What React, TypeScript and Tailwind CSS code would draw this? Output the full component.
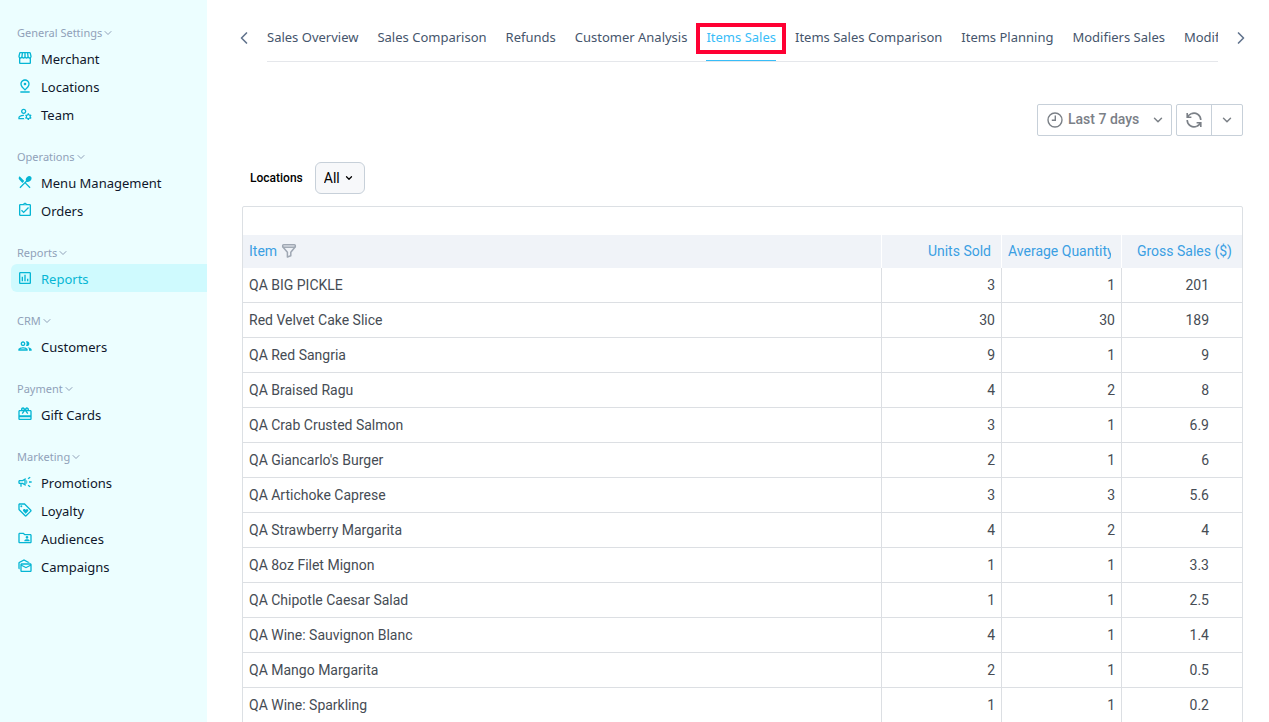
import { useState } from 'react';
import type { ReactNode } from 'react';
import { ChevronDown, ChevronLeft, ChevronRight } from 'lucide-react';
import {
  MdOutlineAssignmentTurnedIn,
  MdOutlineCampaign,
  MdOutlineCardGiftcard,
  MdOutlineFolderShared,
  MdOutlineGroup,
  MdOutlineInsertChart,
  MdOutlineLoyalty,
  MdOutlineManageAccounts,
  MdOutlineMarkAsUnread,
  MdOutlinePinDrop,
  MdOutlineRestaurantMenu,
  MdOutlineStorefront,
} from 'react-icons/md';

type NavItem = { label: string; icon: ReactNode; active?: boolean };
type NavGroup = { title: string; items: NavItem[] };

const groups: NavGroup[] = [
  {
    title: 'General Settings',
    items: [
      { label: 'Merchant', icon: <MdOutlineStorefront /> },
      { label: 'Locations', icon: <MdOutlinePinDrop /> },
      { label: 'Team', icon: <MdOutlineManageAccounts /> },
    ],
  },
  {
    title: 'Operations',
    items: [
      { label: 'Menu Management', icon: <MdOutlineRestaurantMenu /> },
      { label: 'Orders', icon: <MdOutlineAssignmentTurnedIn /> },
    ],
  },
  { title: 'Reports', items: [{ label: 'Reports', icon: <MdOutlineInsertChart />, active: true }] },
  { title: 'CRM', items: [{ label: 'Customers', icon: <MdOutlineGroup /> }] },
  { title: 'Payment', items: [{ label: 'Gift Cards', icon: <MdOutlineCardGiftcard /> }] },
  {
    title: 'Marketing',
    items: [
      { label: 'Promotions', icon: <MdOutlineCampaign /> },
      { label: 'Loyalty', icon: <MdOutlineLoyalty /> },
      { label: 'Audiences', icon: <MdOutlineFolderShared /> },
      { label: 'Campaigns', icon: <MdOutlineMarkAsUnread /> },
    ],
  },
];

const tabs = [
  'Sales Overview',
  'Sales Comparison',
  'Refunds',
  'Customer Analysis',
  'Items Sales',
  'Items Sales Comparison',
  'Items Planning',
  'Modifiers Sales',
  'Modifiers',
];

const rows: [string, string, string, string][] = [
  ['QA BIG PICKLE', '3', '1', '201'],
  ['Red Velvet Cake Slice', '30', '30', '189'],
  ['QA Red Sangria', '9', '1', '9'],
  ['QA Braised Ragu', '4', '2', '8'],
  ['QA Crab Crusted Salmon', '3', '1', '6.9'],
  ["QA Giancarlo's Burger", '2', '1', '6'],
  ['QA Artichoke Caprese', '3', '3', '5.6'],
  ['QA Strawberry Margarita', '4', '2', '4'],
  ['QA 8oz Filet Mignon', '1', '1', '3.3'],
  ['QA Chipotle Caesar Salad', '1', '1', '2.5'],
  ['QA Wine: Sauvignon Blanc', '4', '1', '1.4'],
  ['QA Mango Margarita', '2', '1', '0.5'],
  ['QA Wine: Sparkling', '1', '1', '0.2'],
];

function Sidebar() {
  return (
    <nav className="flex w-[207px] shrink-0 flex-col gap-4 bg-[#ecfeff] pt-5 pl-[11px]">
      {groups.map((group) => (
        <section key={group.title}>
          <button className="flex h-6 items-center pt-0.5 pl-1.5 text-[11px] text-slate-400">
            {group.title}
            <ChevronDown size={12} strokeWidth={2} />
          </button>
          <ul>
            {group.items.map((item) => (
              <li key={item.label}>
                <a
                  href="#"
                  className={
                    item.active
                      ? 'flex h-7 items-center gap-2 rounded-l-md bg-[#cffafe] pl-1.5 text-[13px] text-[#06b6d4]'
                      : 'flex h-7 items-center gap-2 rounded-l-md pl-1.5 text-[13px] text-slate-900'
                  }
                >
                  <span className="text-[16px] text-[#06b6d4]">{item.icon}</span>
                  <span className="pt-[3px]">{item.label}</span>
                </a>
              </li>
            ))}
          </ul>
        </section>
      ))}
    </nav>
  );
}

function Tabs() {
  const [current, setCurrent] = useState('Items Sales');
  return (
    <div className="flex items-center text-slate-500">
      <button aria-label="Previous tabs" className="w-[31px] shrink-0">
        <ChevronLeft size={20} strokeWidth={2} className="-ml-0.5" />
      </button>
      <div role="tablist" className="flex h-12 min-w-0 flex-1 gap-[19px] overflow-hidden border-b border-gray-200">
        {tabs.map((tab) => (
          <button
            key={tab}
            role="tab"
            aria-selected={tab === current}
            onClick={() => setCurrent(tab)}
            className={
              tab === current
                ? 'relative shrink-0 border-b border-[#38bdf8] pt-0.5 text-[13px] whitespace-nowrap text-[#38bdf8]'
                : 'shrink-0 border-b border-transparent pt-0.5 text-[13px] whitespace-nowrap text-slate-600'
            }
          >
            {tab}
            {tab === current && (
              <span className="pointer-events-none absolute -inset-x-2.5 top-[9px] h-[31px] border-4 border-[#ff0033]" />
            )}
          </button>
        ))}
      </div>
      <button aria-label="Next tabs" className="flex w-[51px] shrink-0 pl-[13px]">
        <ChevronRight size={20} strokeWidth={2} />
      </button>
    </div>
  );
}

function ClockIcon() {
  return (
    <svg viewBox="0 0 16 16" className="size-4" fill="none" stroke="currentColor" strokeWidth="1.4">
      <circle cx="8" cy="8" r="7" />
      <path d="M8.3 3.6V8.3H4.8" />
    </svg>
  );
}

function RefreshIcon() {
  return (
    <svg viewBox="0 0 16 16" className="size-4" fill="none" stroke="currentColor" strokeWidth="1.6">
      <path d="M5.2 1.8A6.8 6.8 0 0 1 14.8 8" />
      <path d="M1.2 8a6.8 6.8 0 0 0 9.6 6.2" />
      <path d="M1.2 1v4.2h4.2M1.6 5A7 7 0 0 1 5.2 1.8" />
      <path d="M14.8 15v-4.2h-4.2M14.4 11a7 7 0 0 1-3.6 3.2" />
    </svg>
  );
}

function FunnelIcon() {
  return (
    <svg viewBox="0 0 16 16" className="size-4" fill="none" stroke="currentColor" strokeWidth="1.5" strokeLinejoin="round">
      <path d="M2.6 1.7h10.8a.9.9 0 0 1 .9.9v1.2L9.8 9.2v3.6L6.4 14V9.2L1.7 3.8V2.6a.9.9 0 0 1 .9-.9Z" />
      <path d="M1.7 4.2h12.6" />
    </svg>
  );
}

function Toolbar() {
  return (
    <div className="flex justify-end gap-1 text-[#7b8087]">
      <div className="relative flex h-8 items-center rounded-xs border border-[#c7d0d9] pl-[9px]">
        <ClockIcon />
        <select
          aria-label="Time range"
          className="h-full w-[108px] appearance-none pb-0.5 pl-[5px] text-sm font-medium outline-none"
        >
          <option>Last 7 days</option>
        </select>
        <ChevronDown size={14} strokeWidth={2.5} className="pointer-events-none absolute right-1.5" />
      </div>
      <div className="flex h-8 rounded-xs border border-[#c7d0d9]">
        <button aria-label="Refresh" className="flex w-[35px] items-center justify-center border-r border-[#c7d0d9]">
          <RefreshIcon />
        </button>
        <button aria-label="Refresh interval" className="flex w-[30px] items-center justify-center">
          <ChevronDown size={14} strokeWidth={2.5} />
        </button>
      </div>
    </div>
  );
}

function Filters() {
  return (
    <div className="flex items-center gap-3 pl-2 text-black">
      <label htmlFor="locations" className="text-xs font-medium">
        Locations
      </label>
      <div className="relative flex h-8 items-center rounded-md border border-[#c7d0d9] bg-[#f7f8fa]">
        <select id="locations" className="h-full w-12 appearance-none pl-2 text-sm outline-none">
          <option>All</option>
        </select>
        <ChevronDown size={10} strokeWidth={3} className="pointer-events-none absolute right-2.5" />
      </div>
    </div>
  );
}

function SalesTable() {
  const head = 'h-[33px] border-l border-white px-2.5 pb-0.5 text-right font-normal whitespace-nowrap';
  const cell = 'border-l border-[#dcdfe3] pr-1.5 text-right';
  return (
    <div className="rounded-xs border border-[#dce0e4] pt-7">
      <table className="w-full table-fixed border-separate border-spacing-0 text-sm text-[#464c54]">
        <colgroup>
          <col />
          <col className="w-[120px]" />
          <col className="w-[120px]" />
          <col className="w-[121px]" />
        </colgroup>
        <thead className="bg-[#f0f3f8] text-[#3b9fe3]">
          <tr>
            <th className="h-[33px] pb-0.5 pl-1.5 text-left font-normal">
              <span className="flex items-center gap-1">
                Item
                <button aria-label="Filter items" className="text-[#9fa7b3]">
                  <FunnelIcon />
                </button>
              </span>
            </th>
            <th className={head}>Units Sold</th>
            <th className={head}>
              <span className="-ml-1 block overflow-hidden text-left">Average Quantity</span>
            </th>
            <th className={head}>Gross Sales ($)</th>
          </tr>
        </thead>
        <tbody>
          {rows.map(([name, units, average, gross]) => (
            <tr key={name} className="[&>td]:h-[35px] [&>td]:border-b [&>td]:border-[#dcdfe3]">
              <td className="pl-1.5">{name}</td>
              <td className={cell}>{units}</td>
              <td className={cell}>{average}</td>
              <td className="border-l border-[#dcdfe3] pr-[33px] text-right">{gross}</td>
            </tr>
          ))}
        </tbody>
      </table>
    </div>
  );
}

export default function App() {
  return (
    <div className="flex h-screen overflow-hidden bg-white font-['Noto_Sans','Open_Sans',sans-serif]">
      <Sidebar />
      <main className="min-w-0 flex-1 overflow-hidden pt-3.5 pl-[29px]">
        <Tabs />
        <div className="mt-[42px] mr-[26px] ml-1.5 font-[Roboto,sans-serif]">
          <Toolbar />
          <div className="mt-[26px] mb-3">
            <Filters />
          </div>
          <SalesTable />
        </div>
      </main>
    </div>
  );
}
